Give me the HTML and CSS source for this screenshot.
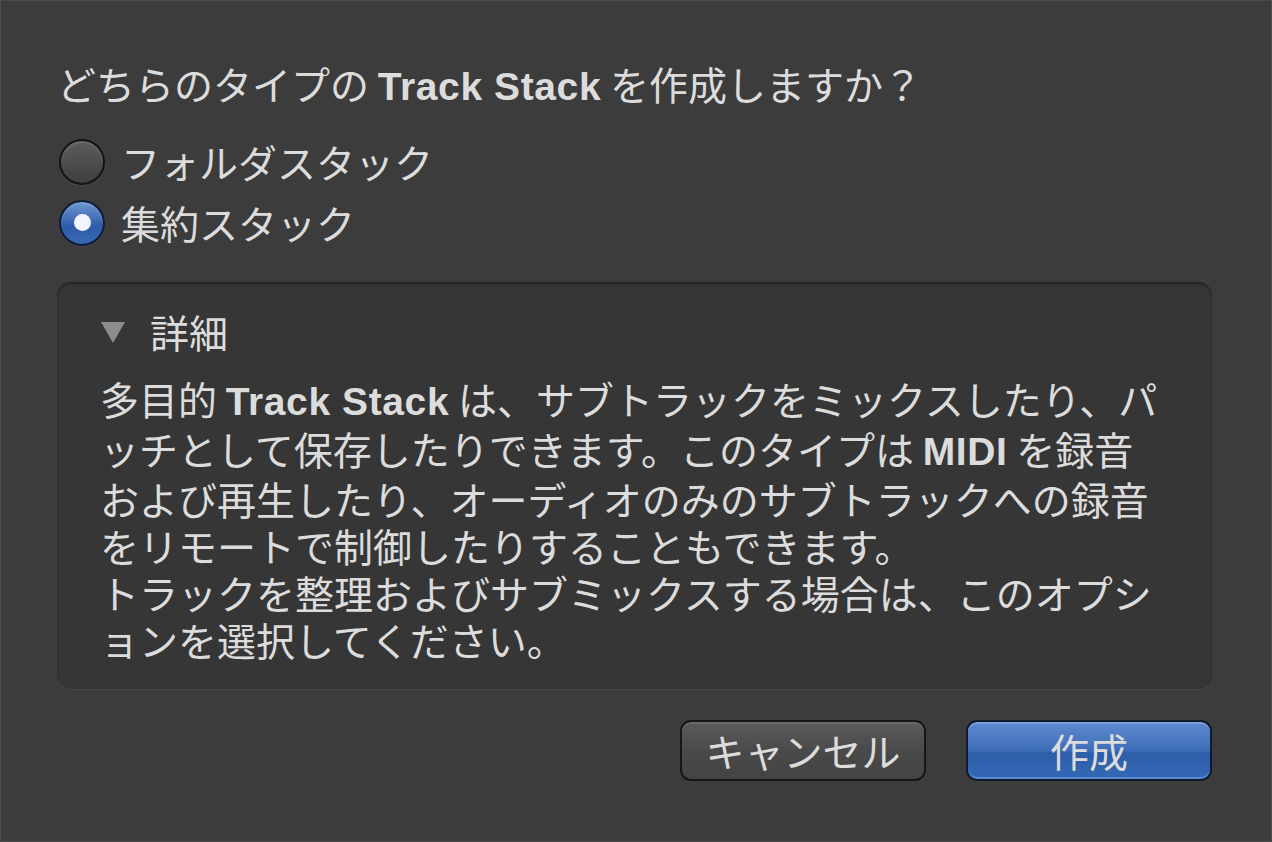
FILE: index.html
```html
<!DOCTYPE html>
<html>
<head>
  <title>Track Stack</title>
  <link rel="stylesheet" href="styles.css">
</head>
<body>
  <div id="dialog">
    <div class="question">どちらのタイプの <span class="latin">Track Stack</span> を作成しますか？</div>

    <div class="radio-group">
      <label class="radio-row">
        <span class="radio"></span>
        <span>フォルダスタック</span>
      </label>
      <label class="radio-row">
        <span class="radio checked"></span>
        <span>集約スタック</span>
      </label>
    </div>

    <div id="details">
      <div class="details-head">
        <svg class="disclosure" width="26" height="24" viewBox="0 0 26 24">
          <polygon points="1,2 25,2 13,23" fill="#8c8c8c"/>
        </svg>
        <span>詳細</span>
      </div>
      <div class="details-text">
        <div>多目的 <span class="latin">Track Stack</span> は、サブトラックをミックスしたり、パ</div>
        <div>ッチとして保存したりできます。このタイプは <span class="latin">MIDI</span> を録音</div>
        <div>および再生したり、オーディオのみのサブトラックへの録音</div>
        <div>をリモートで制御したりすることもできます。</div>
        <div>トラックを整理およびサブミックスする場合は、このオプシ</div>
        <div>ョンを選択してください。</div>
      </div>
    </div>

    <div class="buttons">
      <button class="btn cancel">キャンセル</button>
      <button class="btn primary">作成</button>
    </div>
  </div>
</body>
</html>
```

FILE: styles.css
```css
html, body {
  margin: 0;
  height: 100%;
  background-color: #3c3c3c;
}

body {
  font-family: "Noto Sans CJK JP", "Noto Sans", sans-serif;
  font-size: 39px;
  line-height: 47px;
  color: #dcdcdc;
}

#dialog {
  box-sizing: border-box;
  height: 100%;
  padding: 59px 59px 0 56px;
  border: 1px solid #4c4c4c;
}

.latin {
  font-family: "Liberation Sans", Arial, sans-serif;
  font-weight: bold;
  letter-spacing: 0.6px;
}

.question {
  white-space: nowrap;
}

.radio-group {
  margin-top: 21px;
}

.radio-row {
  display: flex;
  align-items: center;
  height: 61px;
}

.radio {
  box-sizing: border-box;
  width: 46px;
  height: 46px;
  margin: 0 16px 0 2px;
  border-radius: 50%;
  border: 2px solid #141414;
  background: linear-gradient(#5c5c5c, #3f3f3f);
  box-shadow: 0 1px 1px rgba(255, 255, 255, 0.08), inset 0 2px 2px rgba(255, 255, 255, 0.12);
  display: flex;
  align-items: center;
  justify-content: center;
}

.radio.checked {
  border-color: #0f1d38;
  background: linear-gradient(#6f96d2, #2c5ba7 60%, #3a69b5);
}

.radio.checked::after {
  content: "";
  width: 17px;
  height: 17px;
  border-radius: 50%;
  background: #f2f5ff;
}

#details {
  margin-top: 29px;
  height: 407px;
  box-sizing: border-box;
  padding: 26px 40px 0 43px;
  border-radius: 14px;
  background-color: #363636;
  box-shadow: inset 0 2px 3px rgba(0, 0, 0, 0.35), 0 1px 0 rgba(255, 255, 255, 0.06);
}

.details-head {
  display: flex;
  align-items: center;
}

.disclosure {
  margin: 0 24px 0 0;
}

.details-text {
  margin-top: 20px;
  white-space: nowrap;
}

.buttons {
  display: flex;
  justify-content: flex-end;
  gap: 40px;
  margin-top: 31px;
}

.btn {
  width: 246px;
  height: 61px;
  border-radius: 11px;
  font-family: inherit;
  font-size: 39px;
  line-height: 1;
  color: #dcdcdc;
  padding: 0;
}

.btn.cancel {
  border: 2px solid #161616;
  background: linear-gradient(#5a5a5a, #4a4a4a 50%, #434343);
  box-shadow: inset 0 2px 0 rgba(255, 255, 255, 0.1);
}

.btn.primary {
  border: 2px solid #111a2c;
  background: linear-gradient(#5f8ad0, #3e6db8 50%, #2d5da8 55%, #3468b6);
  box-shadow: inset 0 2px 0 rgba(255, 255, 255, 0.18), inset 0 -2px 0 rgba(120, 170, 240, 0.5);
}
```
